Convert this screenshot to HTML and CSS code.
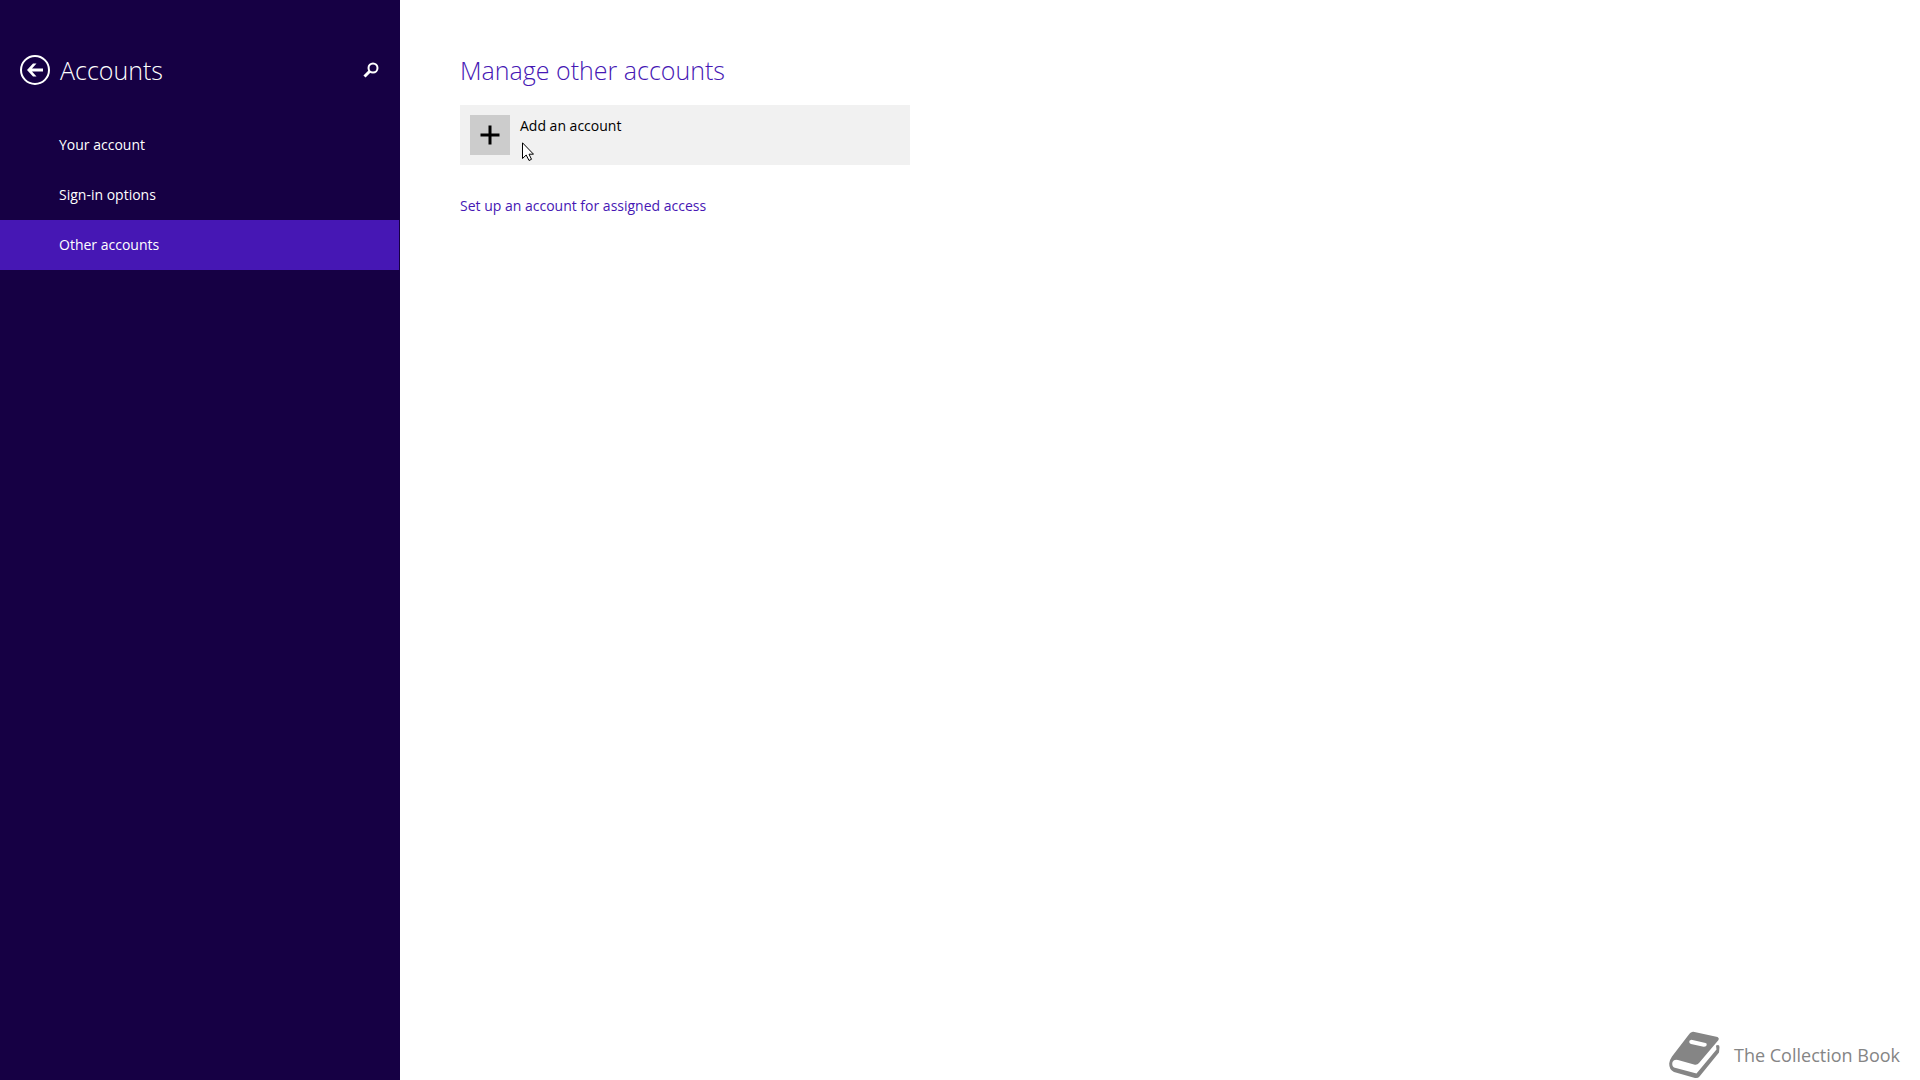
FILE: index.html
```html
<!DOCTYPE html>
<html lang="en">
<head>
  <meta charset="UTF-8" />
  <meta name="viewport" content="width=device-width, initial-scale=1.0" />
  <title>Accounts</title>
  <link rel="stylesheet" href="styles.css">
</head>
<body>

  <aside class="sidebar">
    <header class="sidebar-header">
      <button class="icon-btn" type="button" aria-label="Back">
        <svg width="32" height="32" viewBox="0 0 32 32" fill="#fff">
          <circle cx="16" cy="16" r="14" fill="none" stroke="#fff" stroke-width="2" />
          <path d="M8 16L14 9.500H17.500L13 14.500H24V17.500H13L17.500 22.500H14Z" />
        </svg>
      </button>
      <h1 class="sidebar-title">Accounts</h1>
      <button class="icon-btn" type="button" aria-label="Search">
        <svg width="18" height="18" viewBox="0 0 18 18" fill="none" stroke="#fff">
          <circle cx="11" cy="7" r="4.500" stroke-width="2" />
          <path d="M8 10L2.500 15.500" stroke-width="3" />
        </svg>
      </button>
    </header>

    <nav class="menu">
      <a class="menu-item" href="#">Your account</a>
      <a class="menu-item" href="#">Sign-in options</a>
      <a class="menu-item active" href="#">Other accounts</a>
    </nav>
  </aside>

  <main class="content">
    <h2 class="content-title">Manage other accounts</h2>

    <button class="add-account" type="button">
      <span class="add-icon">
        <svg width="20" height="20" viewBox="0 0 20 20" stroke="#000" stroke-width="3">
          <path d="M10 0.500V19.500M0.500 10H19.500" />
        </svg>
      </span>
      <span class="add-label">Add an account</span>
    </button>

    <a class="link" href="#">Set up an account for assigned access</a>

    <footer class="brand">
      <svg width="52" height="48" viewBox="0 0 52 48">
        <path fill="#858585" fill-rule="evenodd" d="M24 1Q25 0.600 26.500 1L49.500 6Q51.500 7 50.500 9L31 32Q29 34.500 26 33.500L10 29Q6 28 4.500 31Q3.500 34.500 6 36.500L28.500 42.500L48.500 18.500L48 14.500Q51.500 13 51.500 16L51 21.500L31.500 45.500Q30 47.500 27 47L6 41Q1 38.500 1.200 32.500Q1.500 29 4 25.500L20.500 4Q22 1.500 24 1ZM23.500 8.800Q21 9 21.200 11Q21.500 12.700 23 13L35.500 15.800Q37.500 16 38.500 14.400Q39.500 12.500 37.500 12Z" />
      </svg>
      <span class="brand-name">The Collection Book</span>
    </footer>
  </main>

  <!-- mouse pointer -->
  <svg class="pointer" width="12" height="20" viewBox="0 0 12 20">
    <path d="M0.500 0.800V16.500L4.200 13L7 18.500L9.500 17.300L7 12.200H11.500Z" fill="#fff" stroke="#000" />
  </svg>

</body>
</html>
```

FILE: styles.css
```css
* {
  box-sizing: border-box;
}

body {
  display: flex;
  min-height: 100vh;
  margin: 0;
  background: #fff;
  font-family: "Open Sans", "Noto Sans", sans-serif;
  font-size: 14px;
  line-height: 20px;
}

h1,
h2 {
  margin: 0;
  font-size: 25px;
  font-weight: 300;
  line-height: 40px;
}

button {
  padding: 0;
  border: none;
  background: none;
  font: inherit;
  color: inherit;
  cursor: pointer;
}

svg {
  display: block;
}

.sidebar {
  flex: 0 0 400px;
  background: #160044;
  color: #fff;
}

.sidebar-header {
  display: flex;
  align-items: center;
  gap: 9px;
  padding: 50px 20px 30px 19px;
}

.sidebar-title {
  flex: 1;
}

.menu {
  display: flex;
  flex-direction: column;
  padding-right: 1px;
}

.menu-item {
  padding: 15px 59px;
  color: #fff;
  text-decoration: none;
}

.menu-item.active {
  background: #4617b4;
}

.content {
  display: flex;
  flex: 1;
  flex-direction: column;
  align-items: flex-start;
  padding: 50px 20px 1px 60px;
}

.content-title {
  color: #4617b4;
}

.add-account {
  display: flex;
  align-items: flex-start;
  gap: 10px;
  width: 100%;
  max-width: 450px;
  margin-top: 15px;
  padding: 10px;
  background: #f1f1f1;
  color: #000;
}

.add-icon {
  display: flex;
  align-items: center;
  justify-content: center;
  width: 40px;
  height: 40px;
  background: #ccc;
}

.add-label {
  line-height: 22px;
}

.link {
  margin-top: 30px;
  color: #4617b4;
  line-height: 22px;
  text-decoration: none;
}

.brand {
  display: flex;
  align-items: center;
  align-self: flex-end;
  gap: 14px;
  margin-top: auto;
  color: #858585;
  font-size: 18px;
}

.pointer {
  position: absolute;
  top: 142px;
  left: 522px;
}
```
